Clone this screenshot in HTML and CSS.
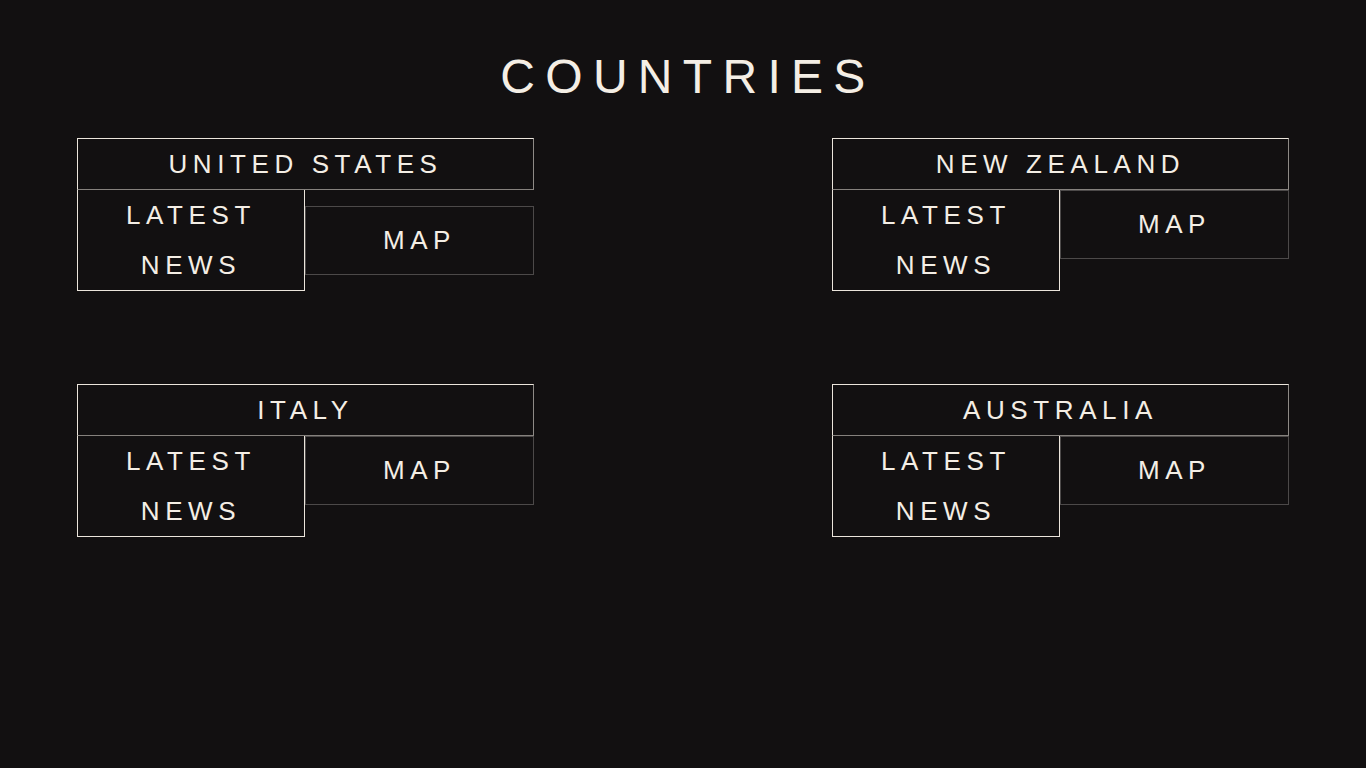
FILE: index.html
```html
<!DOCTYPE html>
<html lang="en">
<head>
<meta charset="utf-8">
<title>Countries</title>
<link rel="stylesheet" href="styles.css">
</head>
<body>
<main class="page">
  <h1 class="page-title">COUNTRIES</h1>
  <section class="grid">
    <article class="card card--centered">
      <div class="card-title">UNITED STATES</div>
      <div class="card-actions">
        <a class="btn btn-news">LATEST<br>NEWS</a>
        <a class="btn btn-map">MAP</a>
      </div>
    </article>
    <article class="card">
      <div class="card-title">NEW ZEALAND</div>
      <div class="card-actions">
        <a class="btn btn-news">LATEST<br>NEWS</a>
        <a class="btn btn-map">MAP</a>
      </div>
    </article>
    <article class="card">
      <div class="card-title">ITALY</div>
      <div class="card-actions">
        <a class="btn btn-news">LATEST<br>NEWS</a>
        <a class="btn btn-map">MAP</a>
      </div>
    </article>
    <article class="card">
      <div class="card-title">AUSTRALIA</div>
      <div class="card-actions">
        <a class="btn btn-news">LATEST<br>NEWS</a>
        <a class="btn btn-map">MAP</a>
      </div>
    </article>
  </section>
</main>
</body>
</html>
```

FILE: styles.css
```css
html, body {
  margin: 0;
  padding: 0;
  background: #121011;
  height: 100%;
}

body {
  font-family: "Liberation Sans", Arial, sans-serif;
  color: #f4eee5;
}

.page {
  padding: 49px 77px 0;
}

.page-title {
  margin: 0 0 34px;
  font-size: 48px;
  font-weight: 400;
  line-height: 55px;
  letter-spacing: 10.3px;
  text-align: center;
  padding-left: 10px;
}

.grid {
  display: grid;
  grid-template-columns: 457px 457px;
  justify-content: space-between;
  row-gap: 93px;
  align-items: start;
}

.card {
  display: flex;
  flex-direction: column;
  font-size: 26px;
  letter-spacing: 5.6px;
  line-height: 50px;
}

.card-title {
  border: 1px solid #ebe5dc;
  border-right-color: #8e8a86;
  border-bottom-color: #85817d;
  text-align: center;
}

.card-actions {
  display: flex;
  align-items: flex-start;
}

.card--centered .card-actions {
  align-items: center;
}

.btn {
  display: block;
  text-align: center;
  color: #f4eee5;
  text-decoration: none;
}

.btn-news {
  width: 228px;
  box-sizing: border-box;
  border: 1px solid #ebe5dc;
  border-top: none;
}

.btn-map {
  flex: 1;
  border: 1px solid #4c4949;
  padding: 8px 0 9px;
}
```
